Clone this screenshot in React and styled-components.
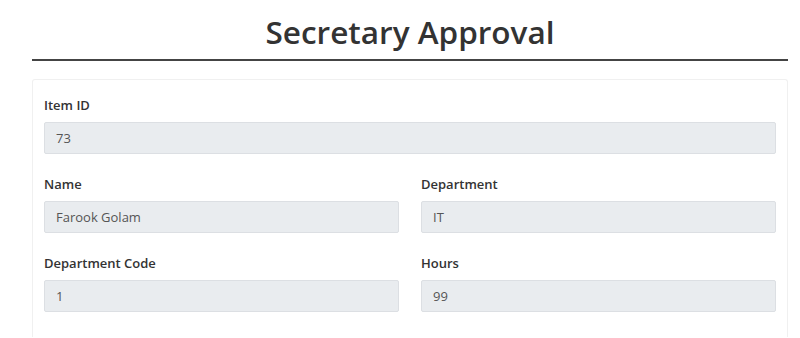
import React from "react";
import styled, { createGlobalStyle } from "styled-components";

const Global = createGlobalStyle`
  html, body { margin: 0; padding: 0; background: #fff; }
  body { font-family: "Open Sans", "Noto Sans", sans-serif; color: #333; }
`;

const Page = styled.div`
  padding: 0 12px 0 32px;
`;

const Title = styled.h1`
  margin: 0;
  padding-top: 13px;
  padding-bottom: 8px;
  text-align: center;
  font-size: 31.5px;
  font-weight: 600;
  line-height: 38px;
  color: #333;
  border-bottom: 2px solid #444;
`;

const Card = styled.div`
  margin-top: 18px;
  border: 1px solid #f0f0f0;
  border-bottom: none;
  border-radius: 3px 3px 0 0;
  padding: 16px 11px 25px 11px;
  display: flex;
  flex-direction: column;
  gap: 21px;
`;

const Row = styled.div`
  display: grid;
  grid-template-columns: ${(p) => (p.cols === 2 ? "1fr 1fr" : "1fr")};
  column-gap: 22px;
`;

const Field = styled.div`
  display: flex;
  flex-direction: column;
`;

const Label = styled.label`
  font-size: 13px;
  font-weight: 600;
  color: #333;
  line-height: 18px;
  margin-bottom: 8px;
`;

const Input = styled.div`
  height: 32px;
  box-sizing: border-box;
  background: #e9ecef;
  border: 1px solid #dcdfe3;
  border-radius: 2px;
  padding: 0 11px;
  display: flex;
  align-items: center;
  font-size: 13px;
  color: #555;
`;

const F = ({ label, value }) => (
  <Field>
    <Label>{label}</Label>
    <Input>{value}</Input>
  </Field>
);

export default function App() {
  return (
    <>
      <Global />
      <Page>
        <Title>Secretary Approval</Title>
        <Card>
          <Row>
            <F label="Item ID" value="73" />
          </Row>
          <Row cols={2}>
            <F label="Name" value="Farook Golam" />
            <F label="Department" value="IT" />
          </Row>
          <Row cols={2}>
            <F label="Department Code" value="1" />
            <F label="Hours" value="99" />
          </Row>
        </Card>
      </Page>
    </>
  );
}
